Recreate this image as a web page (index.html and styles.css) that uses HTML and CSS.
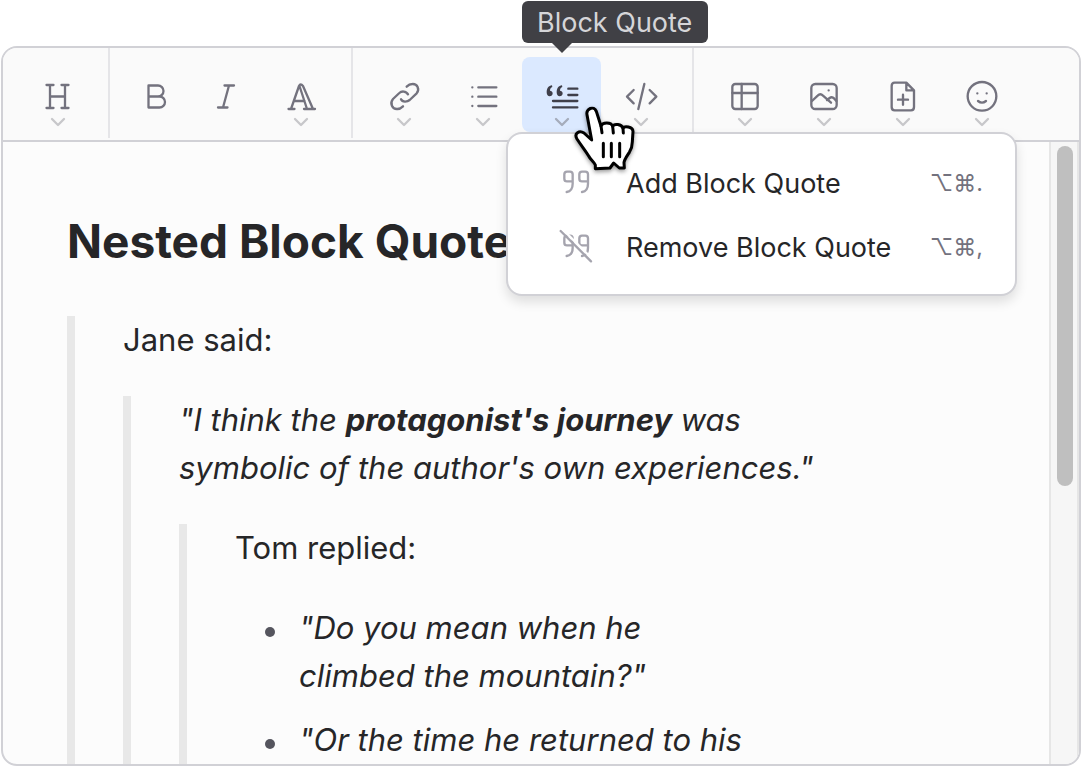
FILE: index.html
```html
<!DOCTYPE html>
<html lang="en">
<head>
<meta charset="utf-8">
<title>Nested Block Quotes</title>
<link rel="stylesheet" href="styles.css">
</head>
<body>
<svg class="sprite" aria-hidden="true">
  <symbol id="arrow" viewBox="0 0 16 10"><path d="M2 2l6 6 6-6"/></symbol>
  <symbol id="quotes" viewBox="0 0 108 108"><path d="M44 49H27q-8 0-8-8V28q0-8 8-8h9q8 0 8 8v28q0 22-18 25M90 49H72q-8 0-8-8V28q0-8 8-8h10q8 0 8 8v28q0 22-18 25"/></symbol>
</svg>
<main class="editor">
  <div class="toolbar" role="toolbar" aria-label="Formatting">
    <div class="group">
      <button class="tool" type="button" aria-label="Heading">
        <svg class="icon" viewBox="0 0 36 36"><path d="M10 6v23M25 6v23M10 17.500h15M6.500 6h7M21.500 6h7M6.500 29h7M21.500 29h7"/></svg>
        <svg class="arrow"><use href="#arrow"/></svg>
      </button>
    </div>
    <div class="group">
      <button class="tool plain" type="button" aria-label="Bold">
        <svg class="icon" viewBox="0 0 36 36"><path d="M10.500 6.500h9.500a5.500 5.500 0 0 1 0 11h-9.500zM10.500 17.500h11a5.500 5.500 0 0 1 0 11h-11z"/></svg>
      </button>
      <button class="tool plain" type="button" aria-label="Italic">
        <svg class="icon" viewBox="0 0 36 36"><path d="M16.500 6.500h9.500M10 28.500h9.500M21 6.500l-6 22"/></svg>
      </button>
      <button class="tool" type="button" aria-label="Text style">
        <svg class="icon" viewBox="0 0 36 36"><path d="M5.500 30h6M21 30h11M8 30L16 7q1.500-3 4 0L30 30M16.500 7l7.500 23M12 22h9.500"/></svg>
        <svg class="arrow"><use href="#arrow"/></svg>
      </button>
    </div>
    <div class="group">
      <button class="tool" type="button" aria-label="Link">
        <svg class="icon fine" viewBox="0 0 108 108"><path d="M66 46C60 35 46 36 40 42L21 60C10 73 19 91 34 90C42 90 47 86 51 82M45 61C49 70 64 69 71 63L92 43C102 31 94 14 79 15C71 15 66 19 62 23"/></svg>
        <svg class="arrow"><use href="#arrow"/></svg>
      </button>
      <button class="tool" type="button" aria-label="List">
        <svg class="icon fine" viewBox="0 0 108 108"><path d="M40 25h54M40 53h54M40 81h54M22 25h0M22 53h0M22 81h0"/></svg>
        <svg class="arrow"><use href="#arrow"/></svg>
      </button>
      <div class="anchor">
        <button class="tool active" type="button" aria-label="Block Quote" aria-expanded="true" aria-describedby="tip">
          <svg class="icon fine" viewBox="0 0 108 108"><path d="M73 29h27M73 48h27M27 66h73M27 85h73"/><path class="solid" d="M24 19C14 20 8 28 8 40c0 8 4 12 9 12s9-4 9-9-4-8-8-8c0-6 3-9 7-11zM54 19c-10 1-16 9-16 21 0 8 4 12 9 12s9-4 9-9-4-8-8-8c0-6 3-9 7-11z"/></svg>
          <svg class="arrow"><use href="#arrow"/></svg>
        </button>
        <div class="tooltip" id="tip" role="tooltip">Block Quote</div>
        <div class="menu" role="menu">
          <button class="item" type="button" role="menuitem">
            <svg class="item-icon" viewBox="0 0 108 108"><use href="#quotes"/></svg>
            <span class="label">Add Block Quote</span>
            <kbd class="keys">⌥⌘.</kbd>
          </button>
          <button class="item" type="button" role="menuitem">
            <svg class="item-icon" viewBox="0 0 108 108"><use href="#quotes"/><path class="gap" d="M14 1l88 88"/><path d="M8 6l91 91"/></svg>
            <span class="label">Remove Block Quote</span>
            <kbd class="keys">⌥⌘,</kbd>
          </button>
        </div>
        <svg class="pointer" viewBox="0 0 201 210"><path class="hand" d="M45 32C41 14 66 4 73 22L87 66C92 54 117 54 122 67C126 58 149 60 153 73C157 65 182 68 183 82L181 113C181 128 178 135 172 145C163 159 157 167 156 176L157 192L142 192L125 177L114 192L70 194L70 183C66 173 56 168 50 156C39 138 28 125 15 105C5 88 22 78 36 87L59 108z"/><path class="lines" d="M94 118v40M118 118v40M143 118v40M87 66l3 20M122 67l2 20M153 73l1 14"/></svg>
      </div>
      <button class="tool" type="button" aria-label="Code">
        <svg class="icon fine" viewBox="0 0 108 108"><path d="M32 33L12 53l20 20M64 15L46 90M80 33l20 20-20 20"/></svg>
        <svg class="arrow"><use href="#arrow"/></svg>
      </button>
    </div>
    <div class="group">
      <button class="tool" type="button" aria-label="Table">
        <svg class="icon fine" viewBox="0 0 108 108"><rect x="16" y="15" width="76" height="75" rx="9"/><path d="M44 15v75M16 42h76"/></svg>
        <svg class="arrow"><use href="#arrow"/></svg>
      </button>
      <button class="tool" type="button" aria-label="Image">
        <svg class="icon fine" viewBox="0 0 108 108"><rect x="16" y="15" width="76" height="75" rx="12"/><path d="M18 66L35 50Q43 42 51 50L75 71M63 63L71 57Q78 52 85 59L91 66M68 34h0"/></svg>
        <svg class="arrow"><use href="#arrow"/></svg>
      </button>
      <button class="tool" type="button" aria-label="File">
        <svg class="icon fine" viewBox="0 0 108 108"><path d="M29 11h35l23 23v50q0 10-9 10H29q-9 0-9-10V21q0-10 9-10zM64 11v23h23M54 47v30M39 62h30"/></svg>
        <svg class="arrow"><use href="#arrow"/></svg>
      </button>
      <button class="tool" type="button" aria-label="Emoji">
        <svg class="icon fine" viewBox="0 0 108 108"><circle cx="54" cy="52" r="43"/><path d="M40 43h0M68 43h0M42 66q12 10 24 0"/></svg>
        <svg class="arrow"><use href="#arrow"/></svg>
      </button>
    </div>
  </div>
  <div class="body">
    <article class="content">
      <h1>Nested Block Quotes</h1>
      <blockquote>
        <p>Jane said:</p>
        <blockquote>
          <p><em>"I think the <strong>protagonist's journey</strong> was symbolic of the author's own experiences."</em></p>
          <blockquote>
            <p>Tom replied:</p>
            <ul>
              <li><em>"Do you mean when he climbed the mountain?"</em></li>
              <li><em>"Or the time he returned to his</em></li>
            </ul>
          </blockquote>
        </blockquote>
      </blockquote>
    </article>
    <div class="scrollbar"><div class="thumb"></div></div>
  </div>
</main>
</body>
</html>
```
FILE: styles.css
```css
* { box-sizing: border-box; }
body {
  margin: 0;
  height: 100vh;
  padding: 46px 1px 0;
  display: flex;
  background: #fff;
  color: #262628;
  font-family: Inter, "Liberation Sans", sans-serif;
}
button { border: 0; background: none; font: inherit; color: inherit; }
.sprite { position: absolute; width: 0; height: 0; }
.editor {
  flex: 1;
  min-width: 0;
  display: flex;
  flex-direction: column;
  border: 2px solid #d1d1d6;
  border-radius: 16px;
  background: #fcfcfc;
}
.toolbar {
  display: flex;
  padding: 0 4px 2px;
  border-bottom: 2px solid #d1d1d6;
  border-radius: 14px 14px 0 0;
  background: #fafafa;
}
.group { display: flex; padding: 9px 11px 6px; }
.group + .group { border-left: 2px solid #e5e5e8; }
.group:nth-child(3) { padding-right: 12px; }
.anchor { position: relative; }
.tool {
  width: 79px;
  height: 75px;
  padding: 22px 0 0;
  display: flex;
  flex-direction: column;
  align-items: center;
  gap: 2px;
  border-radius: 8px;
  color: #73727e;
}
.plain { width: 70px; }
.active { background: #dbe9ff; color: #3f3f4a; }
.icon, .arrow, .item-icon, .hand, .lines {
  fill: none;
  stroke: currentColor;
  stroke-width: 2.3;
  stroke-linecap: round;
  stroke-linejoin: round;
}
.icon { width: 36px; height: 36px; }
.fine, .item-icon { stroke-width: 7; }
.solid { fill: currentColor; stroke: none; }
.arrow { width: 16px; height: 10px; color: #c7c7ca; }
.active .arrow { color: #a5acbb; }
.tooltip {
  position: absolute;
  left: 0;
  bottom: 89px;
  padding: 1px 16px 0 15px;
  border-radius: 6px;
  background: #404045;
  color: #d5d5d8;
  font-size: 27px;
  line-height: 41px;
  white-space: nowrap;
}
.tooltip::after {
  content: "";
  position: absolute;
  top: 100%;
  left: 30px;
  border: 10px solid transparent;
  border-top-color: #404045;
  border-bottom: 0;
}
.menu {
  position: absolute;
  z-index: 1;
  left: -16px;
  top: 75px;
  width: 511px;
  padding: 17px 0 15px;
  border: 2px solid #d1d1d6;
  border-radius: 16px;
  background: #fff;
  box-shadow: 0 6px 12px rgba(0, 0, 0, .12);
}
.item {
  width: 100%;
  height: 64px;
  padding: 0 32px 0 50px;
  display: flex;
  align-items: center;
  text-align: left;
  font-size: 27px;
}
.item-icon { width: 36px; height: 36px; margin-right: 32px; color: #a5a4ae; }
.gap { stroke: #fff; }
.label { flex: 1; white-space: nowrap; }
.keys { font: 23px Inter, "DejaVu Sans", sans-serif; color: #73727e; }
.pointer {
  position: absolute;
  z-index: 2;
  left: 50px;
  top: 47px;
  width: 67px;
  height: 70px;
  overflow: visible;
  filter: drop-shadow(0 2px 2px rgba(0, 0, 0, .4));
}
.hand { fill: #fff; stroke: #000; stroke-width: 9; }
.lines { stroke: #000; stroke-width: 9; }
.body { flex: 1; min-height: 0; display: flex; border-radius: 0 0 14px 14px; overflow: hidden; }
.content {
  flex: 1;
  min-width: 0;
  overflow: hidden;
  padding: 67px 60px 0 64px;
  font-size: 31px;
  line-height: 48px;
}
h1 { margin: 0 0 43px; font-size: 46px; line-height: 64px; }
blockquote { margin: 0; padding: 0 80px 0 48px; border-left: 8px solid #e8e8e8; }
p { margin: 0 0 32px; }
ul { margin: 0; padding-left: 30px; list-style: none; }
li { display: flex; gap: 24px; margin-bottom: 16px; }
li::before {
  content: "";
  flex: none;
  width: 10px;
  height: 10px;
  margin-top: 23px;
  border-radius: 50%;
  background: #55555e;
}
.scrollbar {
  width: 30px;
  padding: 4px 4px 0 6px;
  border: solid #e6e6e6;
  border-width: 0 2px;
  background: #f6f6f6;
}
.thumb { width: 16px; height: 55%; border-radius: 8px; background: #bfbfbf; }
```
